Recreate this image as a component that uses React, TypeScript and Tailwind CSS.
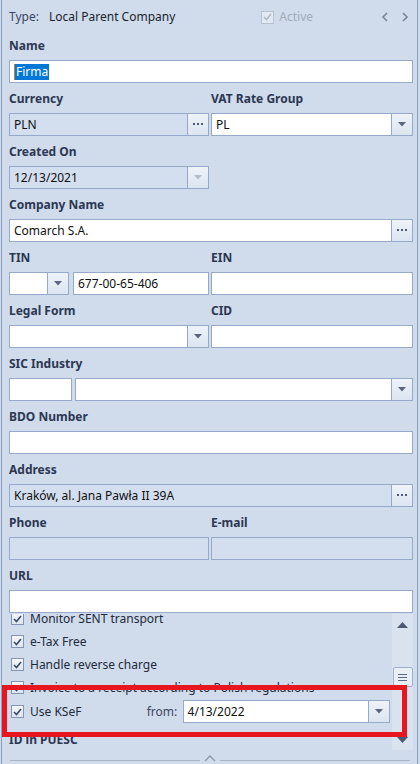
import React from 'react';

const font = { fontFamily: '"Noto Sans", "Liberation Sans", sans-serif' };

const Arrow = ({ disabled }: { disabled?: boolean }) => (
    <svg width="8" height="5" viewBox="0 0 8 5">
        <path d="M0 0 H8 L4 4.5 Z" fill={disabled ? '#b4bccb' : '#5b6680'} />
    </svg>
);

const DropBtn = ({ disabled }: { disabled?: boolean }) => (
    <div className="w-[21px] h-full flex items-center justify-center border-l border-[#97a9c8] bg-gradient-to-b from-[#eef3f9] to-[#dbe5f1]">
        <Arrow disabled={disabled} />
    </div>
);

const DotsBtn = () => (
    <div className="w-[21px] h-full flex items-center justify-center border-l border-[#97a9c8] bg-gradient-to-b from-[#eef3f9] to-[#dbe5f1]">
        <svg width="11" height="3" viewBox="0 0 11 3">
            <rect x="0" y="0" width="2" height="2" fill="#4e5a75" />
            <rect x="4" y="0" width="2" height="2" fill="#4e5a75" />
            <rect x="8" y="0" width="2" height="2" fill="#4e5a75" />
        </svg>
    </div>
);

const Label = ({ children }: { children: React.ReactNode }) => (
    <div className="h-[30px] flex items-center pt-[1px] text-[12px] font-bold text-[#2c3752]">{children}</div>
);

const Field = ({ className = '', gray, children, btn }: { className?: string; gray?: boolean; children?: React.ReactNode; btn?: React.ReactNode }) => (
    <div className={`h-[23px] flex border border-[#97a9c8] ${gray ? 'bg-[#d3deee]' : 'bg-white'} ${className}`}>
        <div className="flex-1 flex items-center px-[4px] text-[12px] text-[#111] whitespace-nowrap overflow-hidden">{children}</div>
        {btn}
    </div>
);

const Check = ({ disabled }: { disabled?: boolean }) => (
    <div className={`w-[13px] h-[13px] border flex items-center justify-center ${disabled ? 'border-[#b7c1d2] bg-[#e3e9f2]' : 'border-[#8495b3] bg-gradient-to-b from-[#f4f7fb] to-[#dde5f0]'}`}>
        <svg width="9" height="8" viewBox="0 0 9 8">
            <path d="M1 4 L3.5 6.5 L8 1" stroke={disabled ? '#b0b9c8' : '#3c4966'} strokeWidth="1.6" fill="none" />
        </svg>
    </div>
);

const CheckRow = ({ label }: { label: string }) => (
    <div className="h-[23px] flex items-center gap-[6px] pl-[2px] text-[12px] text-[#222a3a] whitespace-nowrap">
        <Check />
        <span>{label}</span>
    </div>
);

const App: React.FC = () => {
    return (
        <div className="w-[420px] h-[764px] bg-[#d0dcec] overflow-hidden relative" style={font}>
            <div className="ml-[1px] w-[417px] h-full border-l border-r border-[#8d9fc2] flex flex-col pl-[7px] pr-[4px]">

                <div className="h-[30px] flex items-center pt-[4px] text-[12px]">
                    <span className="text-[#3d4660] w-[40px]">Type:</span>
                    <span className="text-[#1a1f2c]">Local Parent Company</span>
                    <div className="ml-[86px] flex items-center gap-[5px]">
                        <Check disabled />
                        <span className="text-[#a2abbb]">Active</span>
                    </div>
                    <div className="ml-auto flex items-center gap-[12px] pr-[4px] text-[#7c8290]">
                        <svg width="8" height="10" viewBox="0 0 8 10"><path d="M6 1 L2 5 L6 9" stroke="#7c8290" strokeWidth="1.6" fill="none" /></svg>
                        <svg width="8" height="10" viewBox="0 0 8 10"><path d="M2 1 L6 5 L2 9" stroke="#7c8290" strokeWidth="1.6" fill="none" /></svg>
                    </div>
                </div>

                <Label>Name</Label>
                <Field>
                    <span className="bg-[#0078d7] text-white border-l border-[#e07a20] leading-[16px] px-[1px]">Firma</span>
                </Field>

                <div className="grid grid-cols-[200px_202px] gap-x-[2px]">
                    <Label>Currency</Label>
                    <Label>VAT Rate Group</Label>
                    <Field gray btn={<DotsBtn />}>PLN</Field>
                    <Field btn={<DropBtn />}>PL</Field>
                </div>

                <Label>Created On</Label>
                <Field gray className="w-[200px]" btn={<DropBtn disabled />}>12/13/2021</Field>

                <Label>Company Name</Label>
                <Field btn={<DotsBtn />}>Comarch S.A.</Field>

                <div className="grid grid-cols-[200px_202px] gap-x-[2px]">
                    <Label>TIN</Label>
                    <Label>EIN</Label>
                    <div className="flex gap-[4px]">
                        <Field className="w-[60px]" btn={<DropBtn />} />
                        <Field className="flex-1">677-00-65-406</Field>
                    </div>
                    <Field />

                    <Label>Legal Form</Label>
                    <Label>CID</Label>
                    <Field btn={<DropBtn />} />
                    <Field />
                </div>

                <Label>SIC Industry</Label>
                <div className="flex gap-[3px]">
                    <Field className="w-[63px]" />
                    <Field className="flex-1" btn={<DropBtn />} />
                </div>

                <Label>BDO Number</Label>
                <Field />

                <Label>Address</Label>
                <Field gray btn={<DotsBtn />}>Kraków, al. Jana Pawła II 39A</Field>

                <div className="grid grid-cols-[200px_202px] gap-x-[2px]">
                    <Label>Phone</Label>
                    <Label>E-mail</Label>
                    <Field gray />
                    <Field gray />
                </div>

                <Label>URL</Label>
                <Field />

                <div className="h-[136px] flex gap-[2px] mt-[1px]">
                    <div className="flex-1 overflow-hidden">
                        <div className="-mt-[7px]">
                            <CheckRow label="Monitor SENT transport" />
                            <CheckRow label="e-Tax Free" />
                            <CheckRow label="Handle reverse charge" />
                            <CheckRow label="Invoice to a receipt according to Polish regulations" />
                            <div className="h-[25px] flex items-center pl-[2px] text-[12px] text-[#222a3a]">
                                <Check />
                                <span className="ml-[6px] w-[117px]">Use KSeF</span>
                                <span className="text-[#3d4660] w-[36px]">from:</span>
                                <Field className="w-[208px]" btn={<DropBtn />}>4/13/2022</Field>
                            </div>
                            <Label>ID in PUESC</Label>
                        </div>
                    </div>
                    <div className="w-[21px] bg-[#d9e3f0] flex flex-col items-center pt-[8px] pb-[7px]">
                        <svg width="11" height="6" viewBox="0 0 11 6"><path d="M0 6 L5.5 0 L11 6 Z" fill="#4d5873" /></svg>
                        <div className="mt-[39px] w-[20px] h-[20px] rounded-[2px] border border-[#9fb0cc] bg-[#e9eff7] flex flex-col items-center justify-center gap-[2px]">
                            <div className="w-[9px] h-px bg-[#5d6985]" />
                            <div className="w-[9px] h-px bg-[#5d6985]" />
                            <div className="w-[9px] h-px bg-[#5d6985]" />
                        </div>
                        <div className="flex-1" />
                        <svg width="11" height="6" viewBox="0 0 11 6"><path d="M0 0 L5.5 6 L11 0 Z" fill="#4d5873" /></svg>
                    </div>
                </div>

                <div className="h-[14px] flex items-end pb-[2px] gap-[4px] pl-[1px] pr-[3px]">
                    <div className="flex-1 h-px bg-[#a9b3c2] mb-[1px]" />
                    <svg width="12" height="7" viewBox="0 0 12 7"><path d="M1 6 L6 1 L11 6" stroke="#8f98a8" strokeWidth="1.4" fill="none" /></svg>
                    <div className="flex-1 h-px bg-[#a9b3c2] mb-[1px]" />
                </div>
            </div>

            <div className="absolute left-[2px] top-[685px] w-[405px] h-[52px] border-[5px] border-[#e8161e]" />
        </div>
    );
};

export default App;
